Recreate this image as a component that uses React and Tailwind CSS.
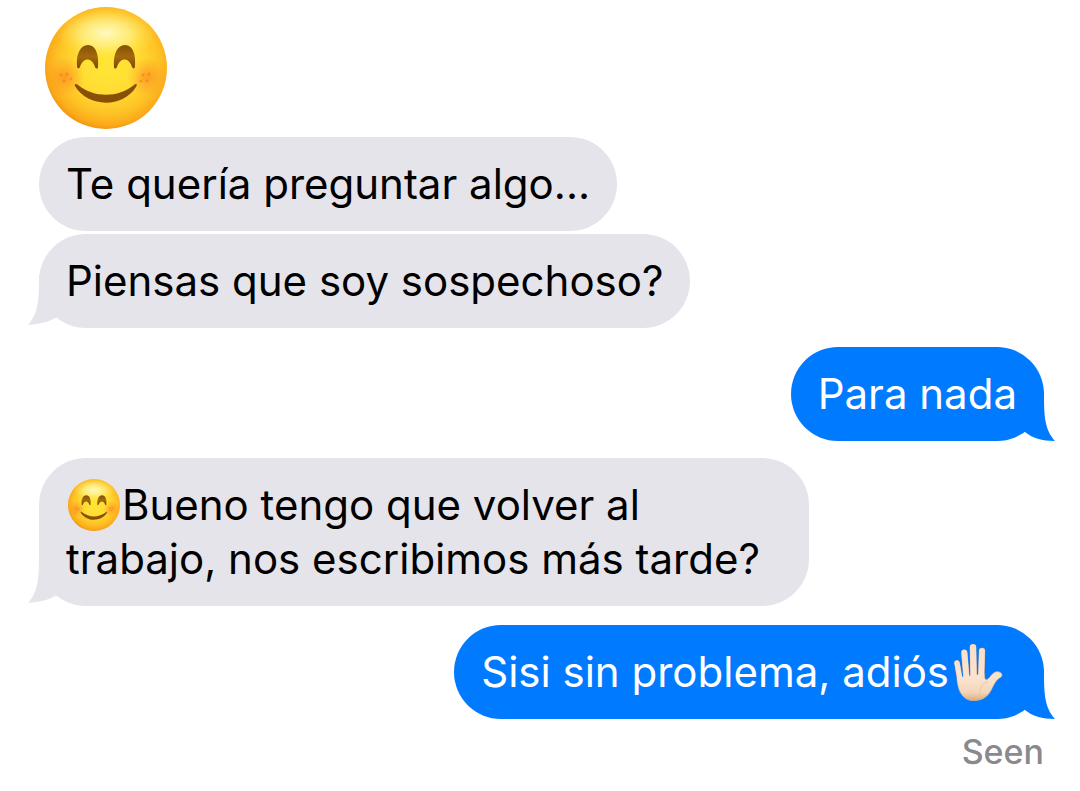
// App.jsx

import React, { useId } from "react";
import clsx from "clsx";

function SmileEmoji({ className }) {
  const id = useId();

  return (
    <svg viewBox="0 0 122 122" className={className} role="img" aria-label="Smiling face">
      <defs>
        <radialGradient id={`${id}face`} cx="0.52" cy="0.46" r="0.55">
          <stop offset="0" stopColor="#ffe636" />
          <stop offset="0.45" stopColor="#ffdd33" />
          <stop offset="0.75" stopColor="#fec326" />
          <stop offset="0.92" stopColor="#fbaa1a" />
          <stop offset="1" stopColor="#f2920e" />
        </radialGradient>
        <radialGradient id={`${id}shine`}>
          <stop offset="0" stopColor="#fffcc8" stopOpacity="0.95" />
          <stop offset="0.5" stopColor="#fff6a0" stopOpacity="0.6" />
          <stop offset="1" stopColor="#ffe94d" stopOpacity="0" />
        </radialGradient>
        <radialGradient id={`${id}cheek`}>
          <stop offset="0" stopColor="#fb7d20" stopOpacity="0.6" />
          <stop offset="1" stopColor="#fb8a20" stopOpacity="0" />
        </radialGradient>
        <linearGradient id={`${id}eye`} x1="0" y1="0" x2="0" y2="1">
          <stop offset="0" stopColor="#80520a" />
          <stop offset="0.5" stopColor="#a5690a" />
          <stop offset="1" stopColor="#7c4a04" />
        </linearGradient>
      </defs>
      <circle cx="61" cy="61" r="61" fill={`url(#${id}face)`} />
      <ellipse cx="61" cy="26" rx="50" ry="26" fill={`url(#${id}shine)`} />
      <circle cx="20" cy="70" r="20" fill={`url(#${id}cheek)`} />
      <circle cx="102" cy="70" r="20" fill={`url(#${id}cheek)`} />
      {/* freckles on the cheeks */}
      <g fill="#f26a1c" fillOpacity="0.45">
        <circle cx="16" cy="68" r="1.5" />
        <circle cx="22" cy="67" r="1.5" />
        <circle cx="19" cy="74" r="1.5" />
        <circle cx="26" cy="72" r="1.5" />
        <circle cx="98" cy="68" r="1.5" />
        <circle cx="104" cy="67" r="1.5" />
        <circle cx="96" cy="74" r="1.5" />
        <circle cx="102" cy="74" r="1.5" />
      </g>
      {/* eyes */}
      <g fill={`url(#${id}eye)`}>
        <path d="M32 59 C31 48 35 38 43 38 C51 38 54 48 53 60 C53 62 51 62 50 60 C47 50 38 50 35 60 C34 62 32 62 32 59 Z" />
        <path d="M69 60 C68 48 72 38 80 38 C88 38 91 48 90 59 C90 62 88 62 87 60 C84 50 75 50 72 60 C71 62 69 62 69 60 Z" />
      </g>
      {/* mouth */}
      <path
        d="M30 79 C29 77 31 76 33 78 C49 91 73 91 89 78 C91 76 93 77 91 80 C78 101 43 101 30 79 Z"
        fill="#875006"
      />
    </svg>
  );
}

function HandEmoji({ className }) {
  const id = useId();

  return (
    <svg viewBox="158 68 150 174" className={className} role="img" aria-label="Raised hand">
      <defs>
        <linearGradient
          id={`${id}skin`}
          gradientUnits="userSpaceOnUse"
          x1="0"
          y1="70"
          x2="0"
          y2="242"
        >
          <stop offset="0" stopColor="#f8dfc8" />
          <stop offset="0.6" stopColor="#fae4d0" />
          <stop offset="0.85" stopColor="#f4d5b8" />
          <stop offset="1" stopColor="#d9a878" />
        </linearGradient>
      </defs>
      {/* finger outlines, slightly darker than the skin */}
      <g stroke="#dcb795" strokeLinecap="round" fill="none">
        <path d="M170 128 L179 178" strokeWidth="17" />
        <path d="M192 97 L198 170" strokeWidth="19" />
        <path d="M218 81 L220 170" strokeWidth="20" />
        <path d="M245 92 L243 170" strokeWidth="19" />
      </g>
      <path
        d="M170 172 L252 160 C252 177 256 182 263 176 C272 168 277 155 290 154 C302 154 308 162 303 169 C290 176 284 186 277 200 C266 226 250 241 218 241 C189 240 175 216 171 185 Z"
        fill={`url(#${id}skin)`}
        stroke="#dcb795"
        strokeWidth="2"
      />
      <g stroke={`url(#${id}skin)`} strokeLinecap="round" fill="none">
        <path d="M170 128 L180 184" strokeWidth="15" />
        <path d="M192 97 L199 178" strokeWidth="17" />
        <path d="M218 81 L220 178" strokeWidth="18" />
        <path d="M245 92 L242 178" strokeWidth="17" />
      </g>
      <path d="M262 184 C248 188 240 200 238 218" stroke="#e9c6a6" strokeWidth="3" fill="none" />
    </svg>
  );
}

function Tail({ sent }) {
  if (sent) {
    return (
      <svg
        viewBox="0 0 40 50"
        className="absolute bottom-0 -right-[11px] h-[50px] w-10 fill-[#007aff]"
        aria-hidden="true"
      >
        <path d="M29 0 C29 23 29 38 40 50 C27 50 17 47 10 41 L0 30 L0 0 Z" />
      </svg>
    );
  }

  return (
    <svg
      viewBox="0 0 40 50"
      className="absolute bottom-[3px] -left-[11px] h-[50px] w-10 fill-[#e5e4eb]"
      aria-hidden="true"
    >
      <path d="M11 0 C11 23 11 38 0 50 C12 49 21 47 29 42 L40 30 L40 0 Z" />
    </svg>
  );
}

function Bubble({ sent = false, tail = false, className, children }) {
  return (
    <div
      className={clsx(
        "relative max-w-[770px] rounded-[47px] px-[27px] py-5 text-[42px] leading-[54px]",
        sent ? "self-end bg-[#007aff] text-white" : "self-start bg-[#e5e4eb] text-black",
        className
      )}
    >
      {tail && <Tail sent={sent} />}
      <p className="relative">{children}</p>
    </div>
  );
}

export default function App() {
  return (
    <main className="flex min-h-screen flex-col bg-white pt-[7px] pr-9 pb-4 pl-[39px] font-['Inter',sans-serif]">
      <SmileEmoji className="ml-[6px] size-[122px]" />
      <Bubble className="mt-2">Te quería preguntar algo...</Bubble>
      <Bubble tail className="mt-[3px]">
        Piensas que soy sospechoso?
      </Bubble>
      <Bubble sent tail className="mt-[19px]">
        Para nada
      </Bubble>
      <Bubble tail className="mt-[17px]">
        <SmileEmoji className="-mt-[7px] mr-[2px] mb-px ml-[2px] inline-block size-[52px] align-middle" />
        Bueno tengo que volver al trabajo, nos escribimos más tarde?
      </Bubble>
      <Bubble sent tail className="mt-[19px]">
        Sisi sin problema, adiós
        <HandEmoji className="-mt-[10px] mr-[14px] -mb-[2px] ml-1 inline-block h-[58px] w-[50px] align-middle" />
      </Bubble>
      <p className="mt-3 self-end text-[34px] leading-[42px] font-medium text-[#8a8a8e]">Seen</p>
    </main>
  );
}
